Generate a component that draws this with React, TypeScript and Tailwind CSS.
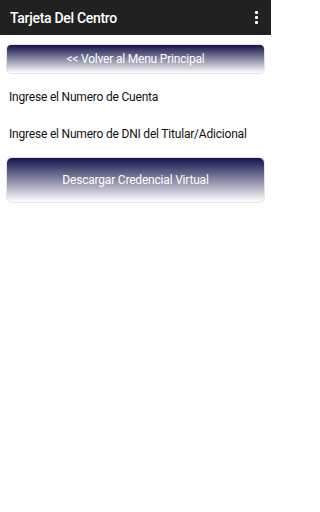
import React from "react";

export default function App() {
  return (
    <div className="w-[271px] h-[512px] bg-white font-['Roboto',sans-serif]">
      <div className="h-[35px] bg-[#212121] flex items-center justify-between pl-[10px] pr-[13px]">
        <span className="text-white text-[14px] font-medium leading-none tracking-[-0.3px] mt-[1px]">Tarjeta Del Centro</span>
        <div className="flex flex-col gap-[2px]">
          <span className="w-[3px] h-[3px] bg-white rounded-[1px]" />
          <span className="w-[3px] h-[3px] bg-white rounded-[1px]" />
          <span className="w-[3px] h-[3px] bg-white rounded-[1px]" />
        </div>
      </div>
      <div className="px-[6px]">
        <div className="mt-[9px] h-[30px] rounded-[5px] border border-[#e4e4e4] bg-[linear-gradient(to_bottom,#12124a,#ffffff)] flex items-center justify-center text-white text-[12px] tracking-[-0.2px]">
          &lt;&lt; Volver al Menu Principal
        </div>
        <div className="mt-[15px] px-[3px] text-[12px] leading-[16px] tracking-[-0.2px] text-[#111]">Ingrese el Numero de Cuenta</div>
        <div className="mt-[21px] px-[3px] text-[12px] leading-[16px] tracking-[-0.2px] text-[#111]">Ingrese el Numero de DNI del Titular/Adicional</div>
        <div className="mt-[15px] h-[46px] rounded-[6px] border border-[#e4e4e4] bg-[linear-gradient(to_bottom,#12124a,#ffffff)] flex items-center justify-center text-white text-[12px] tracking-[-0.2px]">
          Descargar Credencial Virtual
        </div>
      </div>
    </div>
  );
}
